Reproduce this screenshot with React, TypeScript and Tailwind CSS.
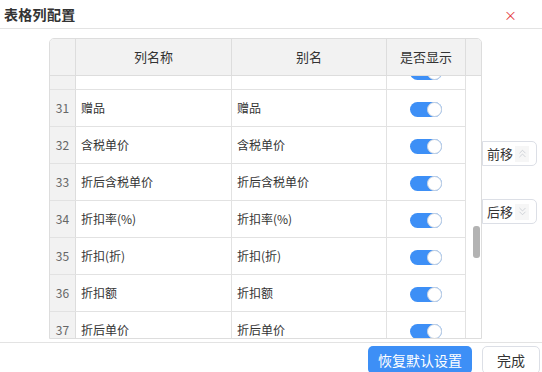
import { ChevronsDown, ChevronsUp } from "lucide-react";

const rows = [
  { no: "", name: "", alias: "" },
  { no: "31", name: "赠品", alias: "赠品" },
  { no: "32", name: "含税单价", alias: "含税单价" },
  { no: "33", name: "折后含税单价", alias: "折后含税单价" },
  { no: "34", name: "折扣率(%)", alias: "折扣率(%)" },
  { no: "35", name: "折扣(折)", alias: "折扣(折)" },
  { no: "36", name: "折扣额", alias: "折扣额" },
  { no: "37", name: "折后单价", alias: "折后单价" },
];

function Toggle() {
  return (
    <div className="flex h-[15px] w-[32px] items-center justify-end rounded-full bg-[#3d8ff6]">
      <div className="h-[15px] w-[15px] rounded-full border border-[#c9d3e0] bg-white" />
    </div>
  );
}

function SideButton({ label, up }: { label: string; up: boolean }) {
  const Icon = up ? ChevronsUp : ChevronsDown;
  return (
    <div className="flex h-[25px] w-[55px] items-center rounded-r-[5px] border border-[#dcdfe6] bg-white pl-[4px] text-[13px] text-[#333]">
      <span>{label}</span>
      <span className="ml-[2px] flex h-[16px] w-[14px] items-center justify-center bg-[#f6f6f6]">
        <Icon size={13} strokeWidth={1.3} className="text-[#c0c4cc]" />
      </span>
    </div>
  );
}

export default function App() {
  return (
    <div
      className="h-[372px] w-[542px] overflow-hidden bg-white text-[#333]"
      style={{ fontFamily: '"Noto Sans CJK SC", "Noto Sans", sans-serif' }}
    >
      <div className="flex h-[29px] items-center justify-between border-b border-[#e3e3e3] pl-[4px] pr-[25px]">
        <span className="text-[14px] font-bold leading-none tracking-[0.3px] text-[#333]">表格列配置</span>
        <span className="text-[13px] leading-none text-[#e4393c]">×</span>
      </div>

      <div className="flex h-[313px] items-start pl-[49px] pt-[9px]">
        <div className="flex h-[301px] w-[433px] flex-col overflow-hidden rounded-t-[5px] border border-[#dddddd]">
          <div className="flex h-[37px] shrink-0 border-b border-[#dddddd] bg-[#f2f2f2] text-[13px] text-[#333]">
            <div className="w-[26px] border-r border-[#dddddd]" />
            <div className="flex w-[156px] items-center justify-center border-r border-[#dddddd]">列名称</div>
            <div className="flex w-[155px] items-center justify-center border-r border-[#dddddd]">别名</div>
            <div className="flex w-[79px] items-center justify-center border-r border-[#dddddd]">是否显示</div>
            <div className="w-[15px]" />
          </div>

          <div className="flex h-[263px] overflow-hidden">
            <div className="w-[416px] overflow-hidden">
              <div className="-mt-[23px]">
                {rows.map((r, i) => (
                  <div key={i} className="flex h-[37px] border-b border-[#e2e2e2] text-[12px]">
                    <div className="flex w-[26px] items-center justify-center border-r border-[#dddddd] bg-[#f2f2f2] text-[#666]">
                      {r.no}
                    </div>
                    <div className="flex w-[156px] items-center border-r border-[#e2e2e2] pl-[5px] text-[#333]">
                      {r.name}
                    </div>
                    <div className="flex w-[155px] items-center border-r border-[#e2e2e2] pl-[5px] text-[#333]">
                      {r.alias}
                    </div>
                    <div className="flex w-[79px] items-center justify-center border-r border-[#e2e2e2] pt-[3px]">
                      <Toggle />
                    </div>
                  </div>
                ))}
              </div>
            </div>
            <div className="w-[15px] pl-[7px] pt-[150px]">
              <div className="h-[32px] w-[7px] rounded-[3px] bg-[#b3b3b3]" />
            </div>
          </div>
        </div>

        <div className="flex flex-col gap-[33px] pt-[103px]">
          <SideButton label="前移" up />
          <SideButton label="后移" up={false} />
        </div>
      </div>

      <div className="flex justify-end gap-[10px] border-t border-[#e3e3e3] pr-[2px] pt-[3px]">
        <div className="flex h-[28px] w-[104px] items-center justify-center rounded-[5px] bg-[#3d8ff6] text-[14px] text-white">
          恢复默认设置
        </div>
        <div className="flex h-[28px] w-[58px] items-center justify-center rounded-[5px] border border-[#dcdfe6] bg-white text-[14px] text-[#333]">
          完成
        </div>
      </div>
    </div>
  );
}
